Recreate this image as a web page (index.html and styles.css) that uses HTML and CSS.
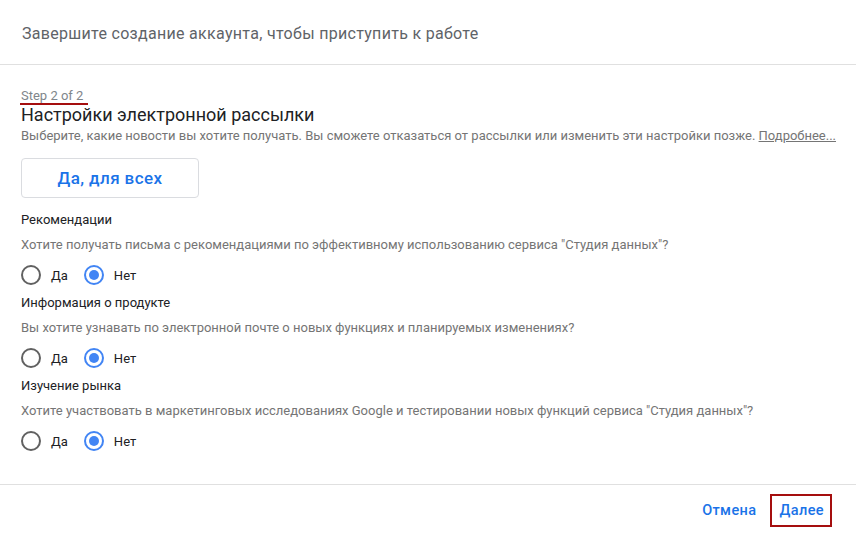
FILE: index.html
```html
<!DOCTYPE html>
<html lang="ru">
<head>
<meta charset="utf-8">
<link rel="stylesheet" href="styles.css">
</head>
<body>
<div class="dialog">
  <header class="header">
    <h1 class="title">Завершите создание аккаунта, чтобы приступить к работе</h1>
  </header>
  <main class="content">
    <div class="step"><span class="step-text">Step 2 of 2</span></div>
    <h2 class="heading">Настройки электронной рассылки</h2>
    <p class="desc">Выберите, какие новости вы хотите получать. Вы сможете отказаться от рассылки или изменить эти настройки позже. <a class="more" href="#">Подробнее...</a></p>
    <button class="all-btn" type="button">Да, для всех</button>

    <section class="group">
      <div class="group-title">Рекомендации</div>
      <div class="group-desc">Хотите получать письма с рекомендациями по эффективному использованию сервиса "Студия данных"?</div>
      <div class="radios">
        <span class="radio"><span class="circle"></span><span class="label">Да</span></span>
        <span class="radio checked"><span class="circle"></span><span class="label">Нет</span></span>
      </div>
    </section>

    <section class="group">
      <div class="group-title">Информация о продукте</div>
      <div class="group-desc">Вы хотите узнавать по электронной почте о новых функциях и планируемых изменениях?</div>
      <div class="radios">
        <span class="radio"><span class="circle"></span><span class="label">Да</span></span>
        <span class="radio checked"><span class="circle"></span><span class="label">Нет</span></span>
      </div>
    </section>

    <section class="group">
      <div class="group-title">Изучение рынка</div>
      <div class="group-desc">Хотите участвовать в маркетинговых исследованиях Google и тестировании новых функций сервиса "Студия данных"?</div>
      <div class="radios">
        <span class="radio"><span class="circle"></span><span class="label">Да</span></span>
        <span class="radio checked"><span class="circle"></span><span class="label">Нет</span></span>
      </div>
    </section>
  </main>
  <footer class="footer">
    <button class="text-btn" type="button">Отмена</button>
    <button class="text-btn next" type="button">Далее</button>
  </footer>
</div>
</body>
</html>
```

FILE: styles.css
```css
* { box-sizing: border-box; }
html, body { margin: 0; padding: 0; background: #fff; }
body { font-family: Roboto, "Noto Sans", Arial, sans-serif; width: 856px; height: 534px; overflow: hidden; }

.dialog { display: flex; flex-direction: column; height: 534px; }

.header {
  height: 65px;
  border-bottom: 1px solid #e0e0e0;
  display: flex;
  align-items: center;
  padding: 3px 0 0 22px;
}
.title {
  margin: 0;
  font-size: 16px;
  font-weight: 400;
  color: #5f6368;
  letter-spacing: 0.3px;
}

.content {
  flex: 1;
  padding: 24px 0 0 21px;
}
.step {
  height: 15px;
  line-height: 0;
}
.step-text {
  display: inline-block;
  font-size: 13px;
  color: #80868b;
  line-height: 14px;
  padding: 0 5px 0 1px;
  margin-left: -1px;
  border-bottom: 2px solid #a50e0e;
}
.heading {
  margin: 0;
  font-size: 18px;
  font-weight: 400;
  color: #202124;
  line-height: 22px;
}
.desc {
  margin: 0;
  font-size: 13px;
  color: #757575;
  line-height: 20px;
}
.more { color: #757575; text-decoration: underline; }

.all-btn {
  margin-top: 12px;
  width: 178px;
  height: 40px;
  background: #fff;
  border: 1px solid #dadce0;
  border-radius: 4px;
  font-family: Roboto, Arial, sans-serif;
  font-size: 17px;
  font-weight: 500;
  color: #1a73e8;
  cursor: pointer;
  letter-spacing: 0.4px;
}

.group { margin-top: 12px; }
.group + .group { margin-top: 7px; }
.group-title {
  font-size: 13px;
  font-weight: 400;
  color: #202124;
  line-height: 20px;
}
.group-desc {
  margin-top: 5px;
  font-size: 13px;
  color: #757575;
  line-height: 20px;
}
.radios {
  margin-top: 9px;
  display: flex;
  align-items: center;
  gap: 16px;
  height: 22px;
}
.radio { display: inline-flex; align-items: center; }
.circle {
  width: 20px;
  height: 20px;
  border-radius: 50%;
  border: 2px solid #616161;
  display: inline-block;
  position: relative;
}
.radio.checked .circle { border-color: #4285f4; }
.radio.checked .circle::after {
  content: "";
  position: absolute;
  left: 3px; top: 3px;
  width: 10px; height: 10px;
  border-radius: 50%;
  background: #4285f4;
}
.label {
  margin-left: 10px;
  font-size: 13px;
  color: #202124;
}

.footer {
  height: 50px;
  border-top: 1px solid #e0e0e0;
  display: flex;
  justify-content: flex-end;
  align-items: center;
  padding: 2px 24px 0 0;
  gap: 5px;
}
.text-btn {
  background: none;
  border: 2px solid transparent;
  font-family: Roboto, Arial, sans-serif;
  font-size: 14.5px;
  font-weight: 500;
  color: #1a73e8;
  padding: 0 7px;
  height: 33px;
  cursor: pointer;
  letter-spacing: 0.4px;
}
.text-btn.next { border-color: #a50e0e; padding: 0 6px 0 7px; }
```
